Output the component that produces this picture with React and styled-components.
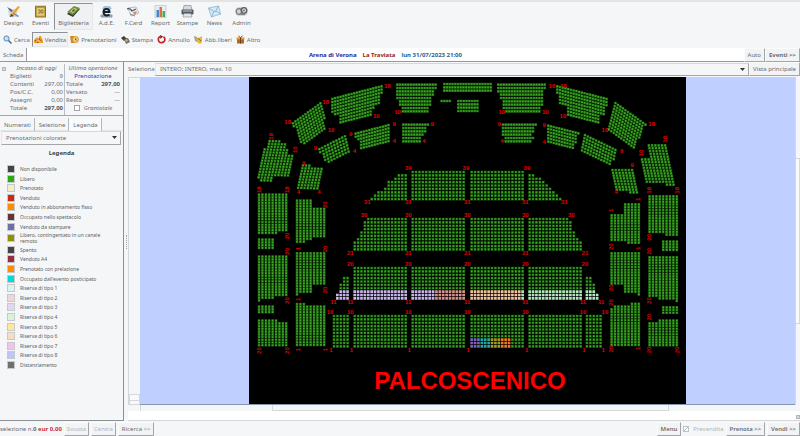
import styled, { createGlobalStyle, css } from 'styled-components';

const GlobalStyle = createGlobalStyle`
    * { box-sizing: border-box; }
    body {
        margin: 0;
        background-color: #f4f6f8;
        color: #6a6d70;
        font-family: "Noto Sans", "Open Sans", sans-serif;
        font-size: 6px;
        line-height: 8px;
    }
    button, select, input {
        font: inherit;
        color: inherit;
        margin: 0;
    }
`

const Page = styled.div`
    min-height: 100vh;
    display: flex;
    flex-direction: column;
    border-top: 2px solid #e3e4e4;
`

const MainBar = styled.nav`
    display: flex;
    height: 29px;
    padding-top: 1px;
`

const sunken = css`
    border-color: #8d9094 #e6e7e8 #e6e7e8 #8d9094;
    background-color: #eff1f4;
`

const ModuleButton = styled.button`
    width: ${props => props.$wide ? 39 : 27}px;
    height: 27px;
    display: flex;
    flex-direction: column;
    align-items: center;
    padding: 1px 0 0;
    border: 1px solid transparent;
    background: none;
    white-space: nowrap;
    ${props => props.$active && sunken}
    svg {
        width: 13px;
        height: 13px;
        flex: none;
    }
    span { margin-top: 1px; }
`

const ActionBar = styled.nav`
    display: flex;
    height: 17px;
    padding: 1px 0 0 1px;
`

const ActionButton = styled.button`
    height: 15px;
    display: flex;
    align-items: center;
    gap: 2px;
    padding: 0 1px;
    border: 1px solid transparent;
    background: none;
    ${props => props.$active && sunken}
    svg {
        width: 9px;
        height: 9px;
    }
`

const TitleBar = styled.header`
    display: flex;
    height: 14px;
    border-bottom: 1px solid #97999c;
`

const EventTitle = styled.h1`
    flex: 1;
    display: flex;
    align-items: center;
    justify-content: center;
    gap: 6px;
    margin: 0;
    background-color: #fff;
    font-size: 6px;
    font-weight: 700;
    color: #28618f;
`

const Venue = styled.span`
    color: #2a2aa0;
`

const Show = styled.span`
    color: #8a2a28;
`

const RaisedButton = styled.button`
    height: 14px;
    display: flex;
    align-items: center;
    padding: 0 3px;
    border: 1px solid;
    border-color: #fafbfb #a3a5a8 #a3a5a8 #fafbfb;
    background-color: #f2f3f5;
    white-space: nowrap;
    font-weight: ${props => props.$bold ? 700 : props.$semi ? 600 : 400};
    color: ${props => props.disabled ? '#b2b4b6' : '#6a6d70'};
`

const TabButton = styled.button`
    height: 13px;
    padding: 0 3px;
    border: 0;
    border-right: 1px solid #97999c;
    background: none;
`

const PanelTab = styled(TabButton)`
    padding: 0 3px 0 4px;
    border-right-color: #b5b7b9;
    background-color: ${props => props.$current ? '#f9fafb' : 'transparent'};
`

const Content = styled.div`
    flex: 1;
    display: flex;
`

const SidePanel = styled.aside`
    width: 124px;
    flex: none;
    border-right: 1px solid #8d9094;
    border-bottom: 1px solid #8d9094;
`

const Totals = styled.section`
    display: flex;
    height: 54px;
    padding: 2px 2px 0;
    border-bottom: 1px solid #a3a5a8;
`

const TotalsColumn = styled.div`
    flex: ${props => props.$grow};
    padding: 0 1px 0 ${props => props.$indent}px;
    border-left: ${props => props.$divided ? '1px solid #b9bfc8' : '0'};
`

const Collapse = styled.button`
    width: 4px;
    height: 4px;
    flex: none;
    margin-top: 3px;
    padding: 0;
    border: 1px solid #b5b7b9;
    background-color: #d5d6d8;
`

const TotalsTable = styled.table`
    width: 100%;
    border-collapse: collapse;
    caption {
        font-style: italic;
        white-space: nowrap;
    }
    th, td {
        padding: 0;
        font-weight: 400;
        text-align: left;
    }
    td { text-align: right; }
`

const Strong = styled.b`
    color: #505356;
`

const Booking = styled.td`
    && { text-align: center; }
    color: #3a3aa0;
`

const CheckLabel = styled.label`
    display: flex;
    align-items: center;
    justify-content: center;
    gap: 4px;
    font-style: ${props => props.$italic ? 'italic' : 'normal'};
    color: ${props => props.$muted ? '#b2b4b6' : 'inherit'};
    input {
        appearance: none;
        width: 6px;
        height: 6px;
        border: 1px solid #a3a5a8;
        background-color: #fff;
    }
    input:checked {
        border-color: #c0c2c4;
        background: linear-gradient(135deg, #fff 40%, #b2b4b6 40% 60%, #fff 60%);
    }
`

const Tabs = styled.div`
    display: flex;
    height: 15px;
    padding: 2px 0 0;
    border-bottom: 1px solid #e3e5e7;
`

const SelectBox = styled.div`
    position: relative;
    flex: 1;
    margin: ${props => props.$inset ? '0 2px 0 1px' : '0'};
    svg {
        position: absolute;
        right: 4px;
        top: 5px;
        width: 5px;
        height: 4px;
        pointer-events: none;
    }
`

const Select = styled.select`
    appearance: none;
    display: block;
    width: 100%;
    height: ${props => props.$tall ? 14 : 13}px;
    padding: 0 4px;
    border: 1px solid;
    border-color: #d5d7d9 #a3a5a8 #a3a5a8 #e6e7e8;
    border-radius: 0;
    background-color: #f4f6f8;
`

const LegendTitle = styled.h2`
    margin: 4px 0 8px;
    font-size: 6px;
    line-height: 8px;
    text-align: center;
    color: #3d3f41;
`

const LegendList = styled.ul`
    display: flex;
    flex-direction: column;
    justify-content: space-between;
    height: 204px;
    margin: 0;
    padding: 0 20px 0 7px;
    list-style: none;
    font-size: 5px;
    line-height: 6px;
    color: #5c5f62;
`

const LegendItem = styled.li`
    display: flex;
    align-items: center;
    gap: 5px;
`

const Swatch = styled.span`
    width: 8px;
    height: 8px;
    flex: none;
    border: 1px solid #c6c8c9;
    background-color: ${props => props.$color};
`

const Splitter = styled.div`
    width: 4px;
    flex: none;
    display: flex;
    align-items: center;
    justify-content: center;
    &::after {
        content: '';
        height: 14px;
        border-left: 1px dotted #a3a5a8;
    }
`

const Workspace = styled.main`
    flex: 1;
    min-width: 0;
    display: flex;
    flex-direction: column;
    border-bottom: 1px solid #d5d7d9;
`

const Filters = styled.div`
    display: flex;
    align-items: center;
    height: 14px;
    label { width: 27px; }
`

const MapRow = styled.div`
    display: flex;
    padding-top: 1px;
`

const SliderTrack = styled.div`
    width: 12px;
    flex: none;
    display: flex;
    flex-direction: column;
    justify-content: flex-end;
    border: 1px solid #d5d7d9;
    border-width: 1px 0 0 1px;
`

const SliderThumb = styled.div`
    height: 11px;
    background: linear-gradient(#f8f9fa 5px, #d5d7d9 5px 6px, #f8f9fa 6px);
    border: 1px solid #d5d7d9;
`

const Canvas = styled.div`
    flex: 1;
    display: flex;
    justify-content: center;
    background-color: #bfcfff;
    border-bottom: 1px solid #8795ad;
`

const SeatMap = styled.svg`
    display: block;
    width: 66.7%;
    height: auto;
    background-color: #000;
    text {
        font-family: "Liberation Sans", Arial, sans-serif;
        font-weight: 700;
        text-anchor: middle;
        fill: #e00000;
    }
`

const VerticalScroll = styled.div`
    width: 5px;
    flex: none;
    display: flex;
    flex-direction: column;
    justify-content: center;
    border-left: 1px solid #d5d7d9;
    &::after {
        content: '';
        height: 50%;
        border: 1px solid #d5d7d9;
        border-left: 0;
        background-color: #fafbfb;
    }
`

const HorizontalScroll = styled.div`
    height: 6px;
    display: flex;
    justify-content: center;
    margin-left: 12px;
    border-left: 1px solid #d5d7d9;
    &::after {
        content: '';
        width: 60%;
        border: 1px solid #d5d7d9;
        border-top: 0;
    }
`

const StatusLine = styled.div`
    flex: 1;
    display: flex;
    align-items: center;
    justify-content: flex-end;
    background-color: #fff;
`

const Footer = styled.footer`
    display: flex;
    align-items: center;
    gap: 2px;
    height: 15px;
`

const Summary = styled.p`
    margin: 0;
    white-space: nowrap;
`

const Amount = styled.b`
    color: #cc3038;
`

const Spacer = styled.div`
    flex: 1;
`

const DisabledButton = styled(RaisedButton).attrs({ disabled: true })`
    padding: 0 2px;
`

const DesignIcon = () => (
    <svg viewBox="0 0 13 13">
        <path d="M1 4h9v8H2z" fill="#cdd9e6" />
        <path d="M0 2l4 2 2 2-2 1z" fill="#59616b" />
        <path d="M3 10L11 1l2 1-7 9z" fill="#e8a63b" />
        <path d="M3 12l1-3 3 2z" fill="#3b4148" />
        <path d="M7 8l5 3-1 1-5-3z" fill="#7d8791" />
    </svg>
)

const CalendarIcon = () => (
    <svg viewBox="0 0 13 13">
        <rect x="1.5" y="1.5" width="10" height="10.500" fill="#c5a342" stroke="#8c702a" />
        <rect x="3" y="3" width="7" height="7.500" fill="#e8cd78" />
        <path d="M4 5h2v3H4M7 5h2v3H7z" fill="none" stroke="#7d6426" strokeWidth=".8" />
        <path d="M1 1.500h11" stroke="#9a8039" strokeWidth="1.500" />
    </svg>
)

const TicketsIcon = () => (
    <svg viewBox="0 0 13 13">
        <path d="M0 9l7-7 6 2-7 8z" fill="#36402a" />
        <path d="M0 7l7-6 6 2-7 7z" fill="#74923a" />
        <path d="M3 6.500L7 3l3 1-4 4z" fill="#c5cf8f" />
        <path d="M5 6l2-2 1 1-2 2z" fill="#3d542a" />
    </svg>
)

const AdeIcon = () => (
    <svg viewBox="0 0 13 13">
        <path d="M2 4l2-3h6l2 3z" fill="#9dc3df" />
        <rect x="0.500" y="9.500" width="12" height="3" rx="1" fill="#8b9db0" />
        <path d="M3.500 7h6c0-4-6-4-6 0 0 4 4 4 6 2.500" fill="none" stroke="#17212c" strokeWidth="2" />
    </svg>
)

const CardIcon = () => (
    <svg viewBox="0 0 13 13">
        <path d="M1 3l8-1 3 6-8 3z" fill="#eef1f5" stroke="#9da7b0" strokeWidth=".7" />
        <path d="M0 4c3-1 4 0 5 2l4-2" fill="none" stroke="#48515b" strokeWidth="1.300" />
        <path d="M6 7l4-1-1 3-2 1z" fill="#dd8d62" />
        <path d="M3 9l5 2" stroke="#7f8c98" />
    </svg>
)

const ReportIcon = () => (
    <svg viewBox="0 0 13 13">
        <rect x="1" y="0.500" width="11" height="12" fill="#e6edf5" stroke="#adbfd2" strokeWidth=".6" />
        <path d="M2.500 5h2.500v7H2.500z" fill="#4a86c8" />
        <path d="M5.500 2H8v10H5.500z" fill="#db7336" />
        <path d="M8.500 6H11v6H8.500z" fill="#53a45b" />
    </svg>
)

const PrinterIcon = () => (
    <svg viewBox="0 0 13 13">
        <path d="M3 0.500h7l1 5H2z" fill="#d7dade" stroke="#777d84" strokeWidth=".6" />
        <rect x="0.500" y="4.500" width="12" height="5" rx="1" fill="#555b62" />
        <path d="M2 6h9" stroke="#c3c8ce" />
        <path d="M3 8.500h7l1 3.500H2z" fill="#e3e6e9" stroke="#858b92" strokeWidth=".6" />
    </svg>
)

const NewsIcon = () => (
    <svg viewBox="0 0 13 13">
        <path d="M0.500 3l10-2 2 8-9 3z" fill="#d9eaf7" stroke="#8db5d5" strokeWidth=".8" />
        <path d="M0.500 3L7 7l3.500-6M3.500 12L6 6.500M12.500 9L8 6" fill="none" stroke="#79a8cd" strokeWidth=".8" />
    </svg>
)

const AdminIcon = () => (
    <svg viewBox="0 0 13 13">
        <rect x="0.500" y="2" width="12" height="9" rx="4" fill="#d2d4d6" />
        <circle cx="4" cy="6.500" r="2.800" fill="none" stroke="#777b7f" strokeWidth="1.300" />
        <circle cx="9" cy="5.500" r="2.800" fill="none" stroke="#5d6165" strokeWidth="1.300" />
        <circle cx="9" cy="5.500" r="1" fill="#777b7f" />
        <path d="M5 9.500h5" stroke="#85898d" />
    </svg>
)

const SearchIcon = () => (
    <svg viewBox="0 0 9 9">
        <circle cx="3.500" cy="3.500" r="2.600" fill="#c6e0f8" stroke="#5288c0" />
        <path d="M5.500 5.500l3 3" stroke="#3d6796" strokeWidth="1.500" />
    </svg>
)

const SaleIcon = () => (
    <svg viewBox="0 0 9 9">
        <path d="M0 8V5l3-3 2 2V1h2l2 5v2z" fill="#e3a126" />
        <path d="M1 5l3 3M5 3l2 4" stroke="#c54f1d" strokeWidth="1.200" />
        <path d="M2 7l2-2 3 2" fill="none" stroke="#f7d36a" />
    </svg>
)

const BookIcon = () => (
    <svg viewBox="0 0 9 9">
        <path d="M0 1h4v7H1z" fill="#d98a1c" />
        <circle cx="5.500" cy="4.500" r="3" fill="#f2d990" stroke="#c98b25" />
        <path d="M5.500 3v2H7" fill="none" stroke="#6b4a1c" strokeWidth=".8" />
    </svg>
)

const StampIcon = () => (
    <svg viewBox="0 0 9 9">
        <path d="M0 3l3-2 3 3-3 2z" fill="#393b3d" />
        <path d="M3 4l4-1 2 4-4 2z" fill="#6b6d70" />
        <path d="M4 5l2-1 1 2-2 1z" fill="#e0b044" />
    </svg>
)

const CancelIcon = () => (
    <svg viewBox="0 0 9 9">
        <path d="M3 1.500A3.300 3.300 0 1 0 6.500 1.700" fill="none" stroke="#c4252a" strokeWidth="1.700" />
        <path d="M3 0l3 1.500L3.500 4z" fill="#7c1518" />
    </svg>
)

const FreeIcon = () => (
    <svg viewBox="0 0 9 9">
        <path d="M0 1l3 1v5l-2-1z" fill="#9c9fa3" />
        <path d="M2 2l3 1 3-2v6L6 9 3 7z" fill="#e5b52e" />
        <path d="M4 3l3 3" stroke="#97701a" />
    </svg>
)

const OtherIcon = () => (
    <svg viewBox="0 0 9 9">
        <rect x="1" y="4" width="7" height="4.500" fill="#b26a20" />
        <rect x="0.500" y="2.500" width="8" height="2" fill="#dc9a35" />
        <path d="M4.500 2.500v6M2.500 1l2 1.500 2-1.500" fill="none" stroke="#7a3b12" />
    </svg>
)

const Caret = () => (
    <svg viewBox="0 0 5 4" aria-hidden="true">
        <path d="M0 0h5L2.500 3z" fill="#333" />
    </svg>
)

const modules = [
    { name: 'Design', icon: DesignIcon },
    { name: 'Eventi', icon: CalendarIcon },
    { name: 'Biglietteria', icon: TicketsIcon, active: true },
    { name: 'A.d.E.', icon: AdeIcon },
    { name: 'F.Card', icon: CardIcon },
    { name: 'Report', icon: ReportIcon },
    { name: 'Stampe', icon: PrinterIcon },
    { name: 'News', icon: NewsIcon },
    { name: 'Admin', icon: AdminIcon },
]

const actions = [
    { name: 'Cerca', icon: SearchIcon },
    { name: 'Vendita', icon: SaleIcon, active: true },
    { name: 'Prenotazioni', icon: BookIcon },
    { name: 'Stampa', icon: StampIcon },
    { name: 'Annullo', icon: CancelIcon },
    { name: 'Abb.liberi', icon: FreeIcon },
    { name: 'Altro', icon: OtherIcon },
]

const legend = [
    ['Non disponibile', '#444444'],
    ['Libero', '#2bab12'],
    ['Prenotato', '#f2efc4'],
    ['Venduto', '#cc2b10'],
    ['Venduto in abbonamento fisso', '#ff8c00'],
    ['Occupato nello spettacolo', '#633434'],
    ['Venduto da stampare', '#6e6eac'],
    ['Libero, contingentato in un canale remoto', '#909000'],
    ['Spento', '#444444'],
    ['Venduto A4', '#9a2c40'],
    ['Prenotato con prelazione', '#ff8c00'],
    ['Occupato dall\'evento posticipato', '#00dada'],
    ['Riserva di tipo 1', '#d8f3f1'],
    ['Riserva di tipo 2', '#f1d6d8'],
    ['Riserva di tipo 3', '#dfd8f0'],
    ['Riserva di tipo 4', '#d6f5d8'],
    ['Riserva di tipo 5', '#ffe799'],
    ['Riserva di tipo 6', '#fadcc2'],
    ['Riserva di tipo 7', '#f5c0f3'],
    ['Riserva di tipo 8', '#bcc6f8'],
    ['Distanziamento', '#707070'],
]

// Straight stalls: x and y of the block, seats per row, and the side the short rows lean on
const full = n => Array(10).fill(n)
const taper = [12, 13, 13, 13, 14, 14, 15, 16, 16, 16]
const stalls = [
    { x: 312, y: 280, rows: [0, 3, 4, 6, 6, 7, 9, 10, 11], cols: 16, right: true },
    { x: 486, y: 280, rows: Array(9).fill(16) },
    { x: 663, y: 280, rows: Array(9).fill(16) },
    { x: 837, y: 280, rows: [0, 2, 4, 5, 6, 7, 8, 9, 10] },
    { x: 312, y: 421, rows: taper, cols: 16, right: true },
    { x: 486, y: 421, rows: full(16) },
    { x: 663, y: 421, rows: full(16) },
    { x: 837, y: 421, rows: taper },
    { x: 260, y: 568, rows: [0, 0, 0, 2, 2, 3, 3, 3, 4, 4], cols: 4, right: true },
    { x: 312, y: 568, rows: full(16) },
    { x: 486, y: 568, rows: full(16) },
    { x: 663, y: 568, rows: full(16) },
    { x: 837, y: 568, rows: full(16) },
    { x: 1009, y: 568, rows: [0, 0, 0, 2, 2, 3, 3, 3, 4, 4] },
    { x: 250, y: 712, rows: full(5) },
    { x: 312, y: 712, rows: full(16) },
    { x: 486, y: 712, rows: full(16) },
    { x: 663, y: 712, rows: full(16) },
    { x: 837, y: 712, rows: full(16) },
    { x: 1009, y: 712, rows: full(5) },
]

// Tiers: drawing offset, seat step along the row, step between rows, outlines
const tiers = [
    // left wing
    { dx: -12, dy: 339, u: [10.2, 0], v: [0, 8.2], shapes: [
        '37,10 126,10 126,124 96,124 96,132 37,132',
        '37,145 87,145 87,178 37,178',
        '37,196 126,196 126,318 87,318 87,327 47,327 47,336 37,336',
        '37,346 87,346 87,371 37,371',
        '37,388 98,388 98,396 126,396 126,470 37,470',
        '151,28 201,28 201,53 242,53 242,143 201,143 201,151 181,151 181,159 151,159',
        '151,186 242,186 242,285 201,285 201,309 161,309 161,317 151,317',
        '151,338 181,338 181,346 242,346 242,470 151,470',
    ] },
    // right wing
    { dx: 648, dy: 339, u: [10.2, 0], v: [0, 8.2], shapes: [
        '435,72 476,72 476,39 526,39 526,162 486,162 486,154 435,154',
        '435,186 526,186 526,317 516,317 516,309 476,309 476,285 435,285',
        '435,354 445,354 445,346 496,346 496,338 526,338 526,469 435,469',
        '549,15 641,15 641,138 600,138 600,130 549,130',
        '590,151 641,151 641,184 590,184',
        '549,198 641,198 641,338 631,338 631,330 580,330 580,321 549,321',
        '590,348 641,348 641,373 590,373',
        '549,396 580,396 580,388 641,388 641,470 549,470',
    ] },
    // galleries facing the stage
    { dx: -12, dy: -6, u: [8.2, 0], v: [0, 10], shapes: [
        '453,24 576,24 576,42 568,42 568,64 560,64 560,92 552,92 552,114 469,114 469,94 461,94 461,72 453,72',
        '594,22 741,22 741,52 594,52',
        '586,73 619,73 619,83 586,83',
        '636,73 702,73 702,113 636,113',
        '471,144 554,144 554,154 545,154 545,174 537,174 537,184 529,184 529,204 471,204',
    ] },
    { dx: 648, dy: -6, u: [8.2, 0], v: [0, 10], shapes: [
        '96,24 244,24 244,44 236,44 236,94 228,94 228,114 121,114 121,104 112,104 112,74 104,74 104,54 96,54',
        '110,144 217,144 217,154 209,154 209,174 201,174 201,184 209,184 209,194 201,194 201,204 119,204 119,184 110,184',
    ] },
    // left curve
    { dx: -12, dy: -6, u: [8.2, -2.1], v: [0, 9.6], shapes: [
        '258,68 414,28 414,54 405,60 405,88 389,95 389,102 380,104 380,124 284,149 281,122 266,120 258,112',
        '328,172 434,144 434,201 345,222 343,195 328,186',
    ] },
    { dx: -12, dy: -6, u: [7.5, -5.4], v: [2.4, 8.8], shapes: ['139,143 230,77 237,110 244,165 174,215 155,170'] },
    { dx: -12, dy: -6, u: [8.5, -4.3], v: [2.2, 9.2], shapes: ['218,220 307,174 319,228 247,267 234,250'] },
    { dx: -12, dy: -6, u: [9.6, 0.3], v: [-1.8, 8.4], shapes: [
        '70,194 109,194 109,204 129,204 125,235 151,237 135,310 80,308 78,318 47,318 43,327 38,326 50,240',
        '170,267 195,267 197,277 237,277 221,342 153,342',
    ] },
    // right curve
    { dx: 648, dy: -6, u: [8.2, 2.1], v: [0, 9.6], shapes: [
        '273,28 429,66 429,86 420,100 420,122 404,122 404,149 306,126 306,95 282,88 282,60 273,55',
        '246,146 344,172 337,185 336,205 328,205 328,222 246,203',
    ] },
    { dx: 648, dy: -6, u: [7.5, 5.4], v: [-2.2, 8.8], shapes: ['449,77 546,146 533,165 510,220 431,166'] },
    { dx: 648, dy: -6, u: [8.3, 4], v: [-1.8, 9.2], shapes: ['357,174 461,226 452,240 449,255 441,252 432,273 345,231'] },
    { dx: 648, dy: -6, u: [9.8, 0], v: [1.8, 8.4], shapes: [
        '546,207 605,207 634,329 606,329 604,321 543,321 525,249 556,249',
        '437,281 505,281 523,353 496,353 495,345 453,345',
    ] },
]

// Reserved areas of the stalls: x from, x to, y from, y to, colour
const reserved = [
    [240, 558, 640, 680, '#c6b4ea'],
    [558, 655, 640, 680, '#d8908c'],
    [655, 816, 640, 680, '#f2c39c'],
    [816, 1100, 640, 680, '#b4e6bf'],
    [663, 693, 783, 820, '#7a63b8'],
    [693, 724, 783, 820, '#22a7a7'],
    [724, 755, 783, 820, '#a39c27'],
    [755, 785, 783, 820, '#ec7a1c'],
]

const inside = (px, py, points) => {
    let hit = false
    points.forEach(([x1, y1], i) => {
        const [x2, y2] = points[(i + 1) % points.length]
        if ((y1 > py) !== (y2 > py) && px < (x2 - x1) * (py - y1) / (y2 - y1) + x1) hit = !hit
    })
    return hit
}

const tierSeats = ({ dx, dy, u, v, shapes }) => shapes.flatMap(shape => {
    const points = shape.split(' ').map(p => p.split(',').map(Number))
    const [x0, y0] = points[0]
    const seats = []
    for (let i = -25; i < 30; i++) {
        for (let j = -25; j < 30; j++) {
            const x = x0 + (i + 0.5) * u[0] + (j + 0.5) * v[0]
            const y = y0 + (i + 0.5) * u[1] + (j + 0.5) * v[1]
            if (inside(x, y, points)) seats.push([x + dx, y + dy])
        }
    }
    return seats
})

const stallSeats = ({ x, y, rows, cols, right }) => rows.flatMap((count, r) =>
    Array.from({ length: count }, (_, i) => [
        x + ((right ? cols - count : 0) + i + 0.5) * 10.2,
        y + (r + 0.5) * 10.15,
    ])
)

const seatPath = (seats, size) => seats
    .map(([x, y]) => `M${(x - size / 2).toFixed(1)} ${(y - size / 2).toFixed(1)}h${size}v${size}h-${size}z`)
    .join('')

const stallSeatList = stalls.flatMap(stallSeats)
const isIn = ([x, y], [x1, x2, y1, y2]) => x > x1 && x < x2 && y > y1 && y < y2
const freeSeats = [
    ...tiers.flatMap(tierSeats),
    ...stallSeatList.filter(seat => !reserved.some(area => isIn(seat, area))),
]

// Row numbers: text, then x,y pairs
const rowNumbers = [
    ['39', '478,273 651,273 834,273'],
    ['31', '355,375 478,375 655,375 829,375 946,375'],
    ['30', '345,414 478,414 655,414 829,414 967,414'],
    ['21', '304,528 478,528 655,528 829,528 1008,528'],
    ['20', '304,561 478,561 655,561 829,561 1008,561'],
    ['11', '253,675 304,675 478,675 655,675 829,675 1002,675 1057,675'],
    ['10', '243,705 304,705 478,705 655,705 829,705 1002,705 1068,705'],
    ['1', '246,818 307,818 481,818 658,818 833,818 1005,818 1063,818'],
    ['18', '230,76 415,27 116,135 909,27 943,27 1208,141'],
    ['10', '382,117 246,158 446,105 758,105 889,105 942,117 1068,158'],
    ['9', '436,141 550,141 199,213 305,172 164,258 751,141 886,143 1118,221 1150,264'],
    ['4', '436,193 525,193 316,223 148,346 210,346 759,193 886,195 1102,346'],
]

const sideNumbers = [
    ['18', '66,178 31,338 113,338 1248,187 1200,340 1283,340'],
    ['10', '138,218 1176,228'],
    ['20', '228,383 113,477 228,516 113,523 228,639 113,671 31,821 113,821'],
    ['20', '1086,509 1200,481 1200,523 1086,632 1086,677 1200,671 1200,721 1086,817 1200,819 1283,819'],
    ['1', '146,515 146,667 146,819 228,819 1086,400 1168,367 1168,514 1168,814'],
]

const numberPoints = groups => groups.flatMap(([label, places]) =>
    places.split(' ').map(place => [label, ...place.split(',').map(Number)])
)

function TheatreMap() {
    return (
        <SeatMap viewBox="0 0 1311 981" role="img" aria-label="Arena di Verona">
            <path d={seatPath(freeSeats, 8)} fill="#17600b" />
            <path d={seatPath(freeSeats, 5)} fill="#40a726" />
            {reserved.map(area => (
                <path key={area.join()} d={seatPath(stallSeatList.filter(seat => isIn(seat, area)), 8)} fill={area[4]} />
            ))}
            {numberPoints(rowNumbers).map(([label, x, y]) => (
                <text key={`${x}-${y}`} x={x} y={y + 6} fontSize="18">{label}</text>
            ))}
            {numberPoints(sideNumbers).map(([label, x, y]) => (
                <text key={`${x}-${y}`} x={x} y={y + 6} fontSize="18" transform={`rotate(-90 ${x} ${y})`}>{label}</text>
            ))}
            <text x="663" y="937" fontSize="72" style={{ fill: '#ff0000' }}>PALCOSCENICO</text>
        </SeatMap>
    )
}

function Sidebar() {
    return (
        <SidePanel>
            <Totals>
                <Collapse aria-label="Riduci" />
                <TotalsColumn $grow={57} $indent={4}>
                    <TotalsTable>
                        <caption>Incasso di oggi</caption>
                        <tbody>
                            <tr><th>Biglietti</th><td>9</td></tr>
                            <tr><th>Contanti</th><td>297,00</td></tr>
                            <tr><th>Pos/C.C.</th><td>0,00</td></tr>
                            <tr><th>Assegni</th><td>0,00</td></tr>
                            <tr><th>Totale</th><td><Strong>297,00</Strong></td></tr>
                        </tbody>
                    </TotalsTable>
                </TotalsColumn>
                <TotalsColumn $grow={58} $indent={1} $divided>
                    <TotalsTable>
                        <caption>Ultima operazione</caption>
                        <tbody>
                            <tr><Booking colSpan={2}>Prenotazione</Booking></tr>
                            <tr><th>Totale</th><td><Strong>297,00</Strong></td></tr>
                            <tr><th>Versato</th><td>---</td></tr>
                            <tr><th>Resto</th><td>---</td></tr>
                        </tbody>
                    </TotalsTable>
                    <CheckLabel $italic><input type="checkbox" />Grantotale</CheckLabel>
                </TotalsColumn>
            </Totals>
            <Tabs>
                <PanelTab>Numerati</PanelTab>
                <PanelTab>Selezione</PanelTab>
                <PanelTab $current>Legenda</PanelTab>
            </Tabs>
            <SelectBox $inset>
                <Select $tall aria-label="Tipo di legenda">
                    <option>Prenotazioni colorate</option>
                </Select>
                <Caret />
            </SelectBox>
            <LegendTitle>Legenda</LegendTitle>
            <LegendList>
                {legend.map(([label, color]) => (
                    <LegendItem key={label}><Swatch $color={color} />{label}</LegendItem>
                ))}
            </LegendList>
        </SidePanel>
    )
}

function App() {
    return (
        <Page>
            <GlobalStyle />
            <MainBar>
                {modules.map(({ name, icon: Icon, active }) => (
                    <ModuleButton key={name} $active={active} $wide={active}><Icon /><span>{name}</span></ModuleButton>
                ))}
            </MainBar>
            <ActionBar>
                {actions.map(({ name, icon: Icon, active }) => (
                    <ActionButton key={name} $active={active}><Icon />{name}</ActionButton>
                ))}
            </ActionBar>
            <TitleBar>
                <TabButton>Scheda</TabButton>
                <EventTitle>
                    <Venue>Arena di Verona</Venue>
                    <Show>La Traviata</Show>
                    <span>lun 31/07/2023 21:00</span>
                </EventTitle>
                <RaisedButton>Auto</RaisedButton>
                <RaisedButton $bold>Eventi &gt;&gt;</RaisedButton>
            </TitleBar>
            <Content>
                <Sidebar />
                <Splitter />
                <Workspace>
                    <Filters>
                        <label htmlFor="seleziona">Seleziona</label>
                        <SelectBox>
                            <Select id="seleziona">
                                <option>INTERO: INTERO, max. 10</option>
                            </Select>
                            <Caret />
                        </SelectBox>
                        <RaisedButton>Vista principale</RaisedButton>
                    </Filters>
                    <MapRow>
                        <SliderTrack><SliderThumb /></SliderTrack>
                        <Canvas><TheatreMap /></Canvas>
                        <VerticalScroll />
                    </MapRow>
                    <HorizontalScroll />
                    <StatusLine><Collapse aria-label="Apri" /></StatusLine>
                </Workspace>
            </Content>
            <Footer>
                <Summary>selezione n.<b>0</b> <Amount>eur 0,00</Amount></Summary>
                <DisabledButton>Svuota</DisabledButton>
                <DisabledButton>Centra</DisabledButton>
                <RaisedButton>Ricerca &gt;&gt;</RaisedButton>
                <Spacer />
                <RaisedButton $semi>Menu</RaisedButton>
                <CheckLabel $muted><input type="checkbox" defaultChecked disabled />Prevendita</CheckLabel>
                <RaisedButton $semi>Prenota &gt;&gt;</RaisedButton>
                <RaisedButton $semi>Vendi &gt;&gt;</RaisedButton>
            </Footer>
        </Page>
    )
}

export default App;
